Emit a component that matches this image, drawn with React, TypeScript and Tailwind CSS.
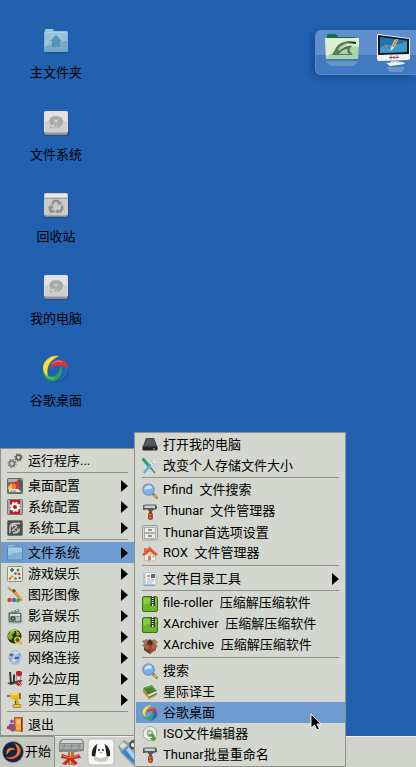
import type { ReactNode } from 'react';
import clsx from 'clsx';

interface Entry {
  label: string;
  icon: ReactNode;
  submenu?: boolean;
  active?: boolean;
}

const svg16 = 'h-4 w-4 shrink-0';

function GearsIcon() {
  return (
    <svg viewBox="0 0 16 16" className={svg16} fill="none">
      <circle cx="5" cy="10.5" r="2.600" stroke="#777974" strokeWidth="1.8" />
      <circle cx="5" cy="10.5" r="4" stroke="#777974" strokeWidth="1.2" strokeDasharray="1.6 1.54" />
      <circle cx="11.5" cy="4.5" r="2.3" stroke="#60625e" strokeWidth="1.7" />
      <circle cx="11.5" cy="4.5" r="3.5" stroke="#60625e" strokeWidth="1.2" strokeDasharray="1.4 1.35" />
    </svg>
  );
}

function DesktopConfigIcon() {
  return (
    <svg viewBox="0 0 16 16" className={svg16}>
      <rect x=".5" y=".5" width="15" height="15" rx="1" fill="#77726f" stroke="#666" />
      <path d="M1 1h14v3H1z" fill="#b5b2ae" />
      <path d="M2 8l4-4 5-1 1 4-1 4H3z" fill="#d2372a" />
      <path d="M1 9l4-4v6H1z" fill="#f4c430" />
      <path d="M5 7l2-2 2 2v4H5z" fill="#f07a35" />
      <path d="M10 2l2 4 1 5 2 2V3l-2-2z" fill="#55575a" />
      <path d="M2 11h9l3 3H2z" fill="#ece7dd" />
      <path d="M3 13h6" stroke="#6b78a0" />
    </svg>
  );
}

function SystemConfigIcon() {
  return (
    <svg viewBox="0 0 16 16" className={svg16}>
      <rect x=".5" y=".5" width="15" height="15" rx="1" fill="#c5161c" stroke="#777" />
      <path d="M1 1h2v14H1zM13 1h2v14h-2z" fill="#a6a6a2" />
      <circle cx="8" cy="8" r="3.2" fill="none" stroke="#fff" strokeWidth="2.2" />
      <circle cx="8" cy="8" r="4.6" fill="none" stroke="#fff" strokeWidth="1.4" strokeDasharray="2 1.61" />
    </svg>
  );
}

function SystemToolsIcon() {
  return (
    <svg viewBox="0 0 16 16" className={svg16}>
      <rect x=".5" y=".5" width="15" height="15" rx="1" fill="#4b4e4d" stroke="#777" />
      <path d="M3 13V8c0-3 2-4.5 5-4.5h5M5 11l5-5M6 12.500c4 1 7-1 6-4M5 7.500c0-2 2-3 4-2" fill="none" stroke="#d5d7d5" strokeWidth="1.3" />
      <circle cx="9" cy="9.500" r="1.800" fill="none" stroke="#b5b7b5" />
    </svg>
  );
}

function FolderIcon() {
  return (
    <svg viewBox="0 0 16 16" className={svg16}>
      <path d="M1 2.500V.500h6l1 2z" fill="#b3d0e6" />
      <rect x=".5" y="2" width="15" height="13" rx="1" fill="#82b1d6" stroke="#5585b0" />
      <path d="M1 2.500h14v4.500c-5 0-9 1-14 3z" fill="#a5cae5" />
    </svg>
  );
}

function GamesIcon() {
  return (
    <svg viewBox="0 0 16 16" className={svg16}>
      <rect x=".5" y=".5" width="15" height="15" rx="1" fill="#e6e6d9" stroke="#8d8e86" />
      <path d="M3 4h4M5 2v4" stroke="#555" strokeWidth="1.500" />
      <circle cx="11" cy="4" r="1.500" fill="#498b3c" />
      <circle cx="8.500" cy="7.500" r="1.300" fill="#3c5d96" />
      <circle cx="5" cy="10.500" r="1.500" fill="#dfac21" />
      <circle cx="12" cy="8" r="1.300" fill="#c23b2c" />
      <circle cx="8.500" cy="12.500" r="1.300" fill="#498b3c" />
      <circle cx="12.500" cy="12" r="1.200" fill="#54707f" />
      <path d="M2 13l2-1" stroke="#c23b2c" strokeWidth="1.500" />
    </svg>
  );
}

function GraphicsIcon() {
  return (
    <svg viewBox="0 0 16 16" className={svg16}>
      <path d="M0 1l2-1 5 4-1 2z" fill="#c79a4b" />
      <path d="M6 3l3 1 6 8v2l-2-.500-7-8z" fill="#d9811f" />
      <path d="M5 3l2-1 2 2-2 2z" fill="#6b4227" />
      <path d="M8 5l6 7" stroke="#f6c158" />
      <circle cx="2.500" cy="13" r="2.200" fill="#d2412f" />
      <circle cx="7" cy="13" r="2.200" fill="#3e6fc4" />
      <circle cx="11" cy="13.500" r="2" fill="#40a64c" />
    </svg>
  );
}

function MediaIcon() {
  return (
    <svg viewBox="0 0 16 16" className={svg16}>
      <path d="M1 5l10-4 2 2-10 4z" fill="#6c716e" />
      <path d="M3 4l2 1M6 3l2 1M9 2l2 1" stroke="#e9ede9" />
      <rect x="2" y="5" width="12" height="9" rx="1" fill="#78988a" stroke="#4c5d55" />
      <path d="M3 6h10v2H3z" fill="#d2e0d6" />
      <circle cx="6" cy="10.500" r="2.300" fill="#38463f" />
      <circle cx="6" cy="10.500" r="1" fill="#82c9a4" />
      <path d="M9 10h4M9 12h4" stroke="#e1eee6" />
      <path d="M1 14l4 1h9l2-2" fill="none" stroke="#9ba39e" />
    </svg>
  );
}

function GlobeIcon() {
  return (
    <svg viewBox="0 0 16 16" className={svg16}>
      <circle cx="7.500" cy="7.500" r="7" fill="#1f3816" />
      <path d="M2 4l4-3 2 2-3 3 1 2-2 3C1 10 0 7 2 4zM9 2l3 1 1 3-3 1-1-3z" fill="#8bb32b" />
      <path d="M3 3c2-2 5-2 7-1" stroke="#d9eb9c" fill="none" />
      <circle cx="10.500" cy="11" r="2.700" fill="#335a5e" stroke="#e9bb22" strokeWidth="1.500" />
      <path d="M12.500 13l2.500 2" stroke="#e1a31d" strokeWidth="2" />
    </svg>
  );
}

function NetworkIcon() {
  return (
    <svg viewBox="0 0 16 16" className={svg16}>
      <circle cx="8" cy="7" r="6.500" fill="#7f9fd4" />
      <path d="M4 3c3-3 7-2 9 0L9 5zM4 9h4l1 4H6z" fill="#c9daf1" />
      <rect x="2" y="3" width="5" height="4" rx="1" fill="#4569ad" stroke="#dce5f0" />
      <rect x="7" y="6" width="6" height="4" rx="1" fill="#3a62ad" stroke="#e9eef6" />
      <path d="M4 14l3-2h5l1 2-4 1z" fill="#a9bbd0" />
    </svg>
  );
}

function OfficeIcon() {
  return (
    <svg viewBox="0 0 16 16" className={svg16}>
      <path d="M2 1h2l1 12H3zM6 4l2-1v9H6z" fill="#38393a" />
      <rect x="9" y="0" width="6" height="5" rx="2" fill="#ba2027" />
      <path d="M9 5h5l-1 5h-3z" fill="#e4dad6" stroke="#7b5352" strokeWidth=".6" />
      <path d="M0 12l14-3 2 1-12 4z" fill="#373737" />
      <path d="M7 11l6-1 2 4-4 1z" fill="#9a3030" />
      <path d="M11 11l4 4" stroke="#e5b765" />
    </svg>
  );
}

function DrillIcon() {
  return (
    <svg viewBox="0 0 16 16" className={svg16}>
      <path d="M3 1h9l2 1v4l-2 1H5L3 6z" fill="#eabc22" />
      <path d="M0 3h3v2H0z" fill="#777" />
      <path d="M12 1h2v6h-2z" fill="#8a7430" />
      <path d="M7 6h4l1 7H8z" fill="#ddab17" />
      <path d="M8 9h1v4H8z" fill="#655028" />
      <rect x="6" y="12.500" width="8" height="3" rx=".5" fill="#efc22d" stroke="#86651b" strokeWidth=".6" />
      <path d="M4 2h7" stroke="#fff0a5" />
    </svg>
  );
}

function LogoutIcon() {
  return (
    <svg viewBox="0 0 16 16" className={svg16}>
      <path d="M7 0h9v15l-9-1z" fill="#a9683a" />
      <path d="M8.500 1.500H14v12.500l-5.500-1z" fill="#ffa63c" />
      <path d="M10 3h3v4h-3z" fill="#ffc56f" />
      <path d="M14 2l1-1v14l-1-1z" fill="#6b4230" />
      <circle cx="5" cy="4.500" r="2" fill="#8a5eaa" />
      <path d="M2 7h5l2 4-3 4-5-3z" fill="#5660b5" />
      <path d="M0 9h5V7l3 3.500L5 14v-2H0z" fill="#c43a49" />
    </svg>
  );
}

function DriveIcon() {
  return (
    <svg viewBox="0 0 16 16" className={svg16}>
      <path d="M4 1h8l3 8v4H1V9z" fill="#3f4245" />
      <path d="M4.500 2h7l2.500 7H2z" fill="#575a5d" />
      <rect x=".5" y="8.500" width="15" height="5" rx="1" fill="#202224" />
      <path d="M1 9h14" stroke="#77797b" strokeWidth=".7" />
      <path d="M11 12h2" stroke="#afb1b2" />
    </svg>
  );
}

function ToolsIcon() {
  return (
    <svg viewBox="0 0 16 16" className={svg16} fill="none">
      <path d="M1.500 1.500l5 6" stroke="#24a267" strokeWidth="3" strokeLinecap="round" />
      <path d="M7 8l6 7" stroke="#6e7476" strokeWidth="1.500" />
      <path d="M2.500 14l6.500-7.500" stroke="#5bb0df" strokeWidth="2.600" strokeLinecap="round" />
      <path d="M9 6.500l2-2M11 1v4h4" stroke="#e3ebef" strokeWidth="2.500" />
      <path d="M10 1v4l1 1h4" stroke="#91a3ad" strokeWidth=".7" />
    </svg>
  );
}

function SearchIcon() {
  return (
    <svg viewBox="0 0 16 16" className={svg16}>
      <path d="M10.500 10.500l4 4" stroke="#98733a" strokeWidth="2.800" strokeLinecap="round" />
      <path d="M12 12l2.500 2.500" stroke="#e9bd64" strokeWidth="1.400" />
      <circle cx="6.500" cy="6.500" r="5.700" fill="#77b3f0" stroke="#7f97ba" strokeWidth="1.300" />
      <path d="M2.500 7c0-4 5-6 7.500-3-1 3-4 1-7.500 3z" fill="#d1e9fd" />
    </svg>
  );
}

function HammerIcon() {
  return (
    <svg viewBox="0 0 16 16" className={svg16}>
      <path d="M7 6h3v5H7z" fill="#85522f" />
      <rect x="6.500" y="9" width="4" height="6.500" rx="1.300" fill="#bf562c" stroke="#65311d" strokeWidth=".6" />
      <path d="M8 10v4" stroke="#f5a165" />
      <path d="M1 1.500L3 .500h11l1 2v2.500l-4 1v1H6V5.500L1 6z" fill="#55585a" />
      <path d="M2.500 1.500H13V4H2.500z" fill="#c8ccce" />
      <path d="M6.500 12h4" stroke="#a32821" />
    </svg>
  );
}

function CabinetIcon() {
  return (
    <svg viewBox="0 0 16 16" className={svg16}>
      <rect x=".5" y=".5" width="15" height="14.500" rx="1.500" fill="#d6d8d5" stroke="#9a9c99" />
      <rect x="2.500" y="2.500" width="11" height="5" fill="#eceeeb" stroke="#a0a29f" strokeWidth=".8" />
      <rect x="2.500" y="8.500" width="11" height="5" fill="#eceeeb" stroke="#a0a29f" strokeWidth=".8" />
      <path d="M6 5h4M6 11h4" stroke="#757772" strokeWidth="1.400" />
    </svg>
  );
}

function HomeIcon() {
  return (
    <svg viewBox="0 0 16 16" className={svg16}>
      <path d="M2.500 8h11v6.500l-5 .8-6-1z" fill="#f3f0ea" stroke="#aaa59b" strokeWidth=".7" />
      <path d="M2 2h2.500v4H2z" fill="#d07654" />
      <path d="M0 8.500L7.500.500l8.500 8-2 1.500-6-5-6 5z" fill="#e75a2b" />
      <path d="M3 9l5-4.500 5 4.500" fill="none" stroke="#c0482a" strokeWidth=".7" />
      <rect x="6" y="9.500" width="3" height="5" fill="#e17a46" />
      <path d="M10.500 9.500h2v2h-2z" fill="#93afc2" />
    </svg>
  );
}

function DirectoryIcon() {
  return (
    <svg viewBox="0 0 16 16" className={svg16}>
      <path d="M1 2h2v13H1z" fill="#9cc6e4" />
      <path d="M3 1.500h11v12H3z" fill="#f4f5f1" stroke="#b4b7b3" strokeWidth=".7" />
      <path d="M5 4h3v2H5z" fill="#d49342" />
      <path d="M9 3h4v4H9z" fill="#426d98" />
      <path d="M5 8h3M5 10h7M5 12h5M9 8.500h3" stroke="#8aa6bc" strokeWidth=".8" />
      <path d="M2 14.500h11" stroke="#79a9cd" />
    </svg>
  );
}

function ZipIcon() {
  return (
    <svg viewBox="0 0 16 16" className={svg16}>
      <rect x=".5" y=".5" width="15" height="15" rx="1.500" fill="#69b52b" stroke="#34741a" />
      <path d="M1.500 2h13v4c-5 0-9 1-13 3z" fill="#8acd45" />
      <path d="M8.500 0h4.500v10H8.500z" fill="#2f3a2b" />
      <path d="M10.700 0v8" stroke="#e6ebe4" strokeWidth="1.800" strokeDasharray="1 1" />
      <path d="M10 8h1.500v2H10z" fill="#e6ebe4" />
    </svg>
  );
}

function BoxIcon() {
  return (
    <svg viewBox="0 0 16 16" className={svg16}>
      <path d="M2 5l6-3 6 3v7l-6 4-6-4z" fill="#85553b" />
      <path d="M2 5l6 3v8l-6-4z" fill="#694030" />
      <path d="M0 3l5-2 3 3-5 3zM8 4l4-3 4 3-3 3z" fill="#a87751" />
      <path d="M0 7l3-1 5 3-3 3zM8 9l5-3 3 2-4 4z" fill="#9c6a4b" />
      <path d="M5 4l3-3 3 3-1.500 4h-3z" fill="#46302a" />
      <path d="M6.500 7h3v3.500L8 12.500l-1.500-2z" fill="#d62d20" />
    </svg>
  );
}

function BookIcon() {
  return (
    <svg viewBox="0 0 16 16" className={svg16}>
      <path d="M1 4l9-3 5 6-9 4z" fill="#4b7f2e" />
      <path d="M6 11l9-4v4l-8 4.500z" fill="#55802f" />
      <path d="M5.500 11L15 7v1.500l-9 4.500z" fill="#f2ebd1" />
      <path d="M1 4l5 7 1 4.500L1 8z" fill="#b48e40" />
      <path d="M3 4.500l7-2.500 3 4" fill="none" stroke="#87ae54" />
      <path d="M6.500 15l8.500-4.500" stroke="#dccf9d" strokeWidth=".8" />
    </svg>
  );
}

function DiscIcon() {
  return (
    <svg viewBox="0 0 16 16" className={svg16}>
      <circle cx="8" cy="7.500" r="7" fill="#eef0ed" stroke="#a3a5a2" />
      <path d="M2 5a7 7 0 016-4v5z" fill="#d3dfcf" />
      <circle cx="8" cy="7.500" r="3" fill="#b4c8ac" stroke="#97a190" />
      <circle cx="8" cy="7.500" r="1" fill="#fff" />
      <path d="M7 8c5-1 6 1 6 4h2l-3.500 3.500L7.500 12H10c0-2-1-2-3-2z" fill="#4ca52c" />
    </svg>
  );
}

// Interlocked four colour ring
function SwirlIcon({ className = svg16 }: { className?: string }) {
  return (
    <svg viewBox="0 0 28 28" className={className}>
      <path d="M27 14c1 8-6 13-14 14l6-4 6-8z" fill="#102b4a" opacity=".35" />
      <path d="M26 12c1 8-4 14-13 15 4-2 6-4 7-8 1-3 0-5-2-8 3 0 6 0 8 1z" fill="#2364b4" />
      <path d="M1 15c0 7 4 11 10 11 6-1 9-6 9-12l-2-3c0 5-2 9-6 10-5 1-9-1-11-6z" fill="#2fa350" />
      <path d="M8 14c1-5 4-9 10-9 5 0 8 3 8 9-3-3-6-4-9-3.500-4 0-6 1-9 3.500z" fill="#dc3338" />
      <path d="M17 1C9 0 2 5 1 12c0 4 1 7 5 9-1-4-1-8 2-13 2-3 5-5 9-7z" fill="#f3dc2c" />
      <path d="M10 9c3-3 7-4 10-2" fill="none" stroke="#f08580" />
      <path d="M3 12c1-4 4-7 7-8" fill="none" stroke="#fbf08a" />
      <path d="M3 19c2 4 6 5 10 4" fill="none" stroke="#7acb83" />
    </svg>
  );
}

function HomeFolderIcon() {
  return (
    <svg viewBox="0 0 26 26" className="h-[26px] w-[26px]">
      <path d="M2 4V2q0-1 1-1h7l1 2h13v3z" fill="#9cc5dc" />
      <path d="M2 23h23v1.500q-1 1-2 1H3q-1 0-1-1z" fill="#164274" opacity=".6" />
      <rect x="1" y="3" width="24" height="21" rx="1.500" fill="#76aacb" />
      <path d="M1.500 4h23v9c-9 0-16 2-23 6z" fill="#96c2da" />
      <path d="M2 4h22" stroke="#bbdbe9" />
      <path d="M13 7l-6 6h2v6h8v-6h2z" fill="#5a92b6" />
    </svg>
  );
}

function DiskIcon() {
  return (
    <svg viewBox="0 0 26 26" className="h-[26px] w-[26px]">
      <rect x="1" y="4" width="25" height="22" rx="2" fill="#164274" opacity=".5" />
      <rect x="1" y="1" width="24" height="24" rx="2" fill="#8c8f91" />
      <rect x="1" y="1" width="24" height="21.500" rx="2" fill="#e2e2e2" />
      <path d="M2 11h22v11H2z" fill="#cfcfcf" />
      <path d="M7 14c-2-5 1-8 6-8 5 0 8 3 7 7-1 3-4 5-8 6 2-1 3-3 3-5-2 3-3 4-5 4 1-1 2-3 2-4-2 1-4 2-5 0z" fill="#a9abab" />
      <ellipse cx="13" cy="11" rx="2" ry="1.500" fill="#c9caca" />
      <path d="M8 16.500v2" stroke="#9b9d9d" strokeWidth="1.500" />
    </svg>
  );
}

function TrashIcon() {
  return (
    <svg viewBox="0 0 26 26" className="h-[26px] w-[26px]">
      <rect x="1" y="4" width="25" height="22" rx="2" fill="#164274" opacity=".5" />
      <rect x="1" y="1" width="24" height="24" rx="2" fill="#858786" />
      <rect x="1" y="1" width="24" height="22.500" rx="2" fill="#cbcbc9" />
      <path d="M2 2h22v3H2z" fill="#e8e8e7" />
      <path d="M1 6.500h24" stroke="#a3a5a4" />
      <g fill="none" stroke="#8d908f" strokeWidth="2.400">
        <path d="M9 12.500l2-3.500h4l1.500 3" />
        <path d="M18.500 13.500l1 2.500-2 3.500h-3" />
        <path d="M11.500 19.500H8L6.500 16 8 13.500" />
      </g>
      <path d="M14.500 12.500h4V9.500zM15 17v5l-3-2.500zM6 14.500l4-1v4z" fill="#8d908f" />
    </svg>
  );
}

function DockFolder() {
  return (
    <svg viewBox="0 0 36 34" className="h-[34px] w-9">
      <path d="M3 5V3q0-2 2-2h7l2 3h17v4H2z" fill="#0e6d43" />
      <path d="M1 5h34l-1 21H2z" fill="#a9d6a6" />
      <path d="M1 5h34v9C22 13 12 18 2 24z" fill="#dcf0d0" />
      <path d="M11 17c2-7 12-11 21-8l-1 2c-8-2-13 1-16 7 5-5 9-6 14-5-5 2-4 5 0 9-5-1-7-3-5-6-4 0-7 2-9 5h13v1H8c1-2 2-4 3-5z" fill="#567a58" />
      <path d="M14 16c4-5 8-6 12-6-5 2-8 4-11 8z" fill="#a5c795" />
      <path d="M24 9l8 0v2z" fill="#1e2d24" />
      <path d="M2 28h32l-4 5H6z" fill="#8dbbc8" opacity=".45" />
    </svg>
  );
}

function DockMonitor() {
  return (
    <svg viewBox="0 0 40 42" className="h-[42px] w-10">
      <path d="M3 2q0-1 1-1l30 4q2 0 2 2v18q0 2-2 2l-29 1q-2 0-2-2z" fill="#f1f3f4" />
      <path d="M4 2l31 4v15L4 22z" fill="#12171d" />
      <path d="M6 4l27 3.500V19L6 20z" fill="#1f74ab" />
      <path d="M6 15c9-6 14 0 27-7v11L6 20z" fill="#3c97cb" />
      <path d="M24 6.500l-3 7-5 5 2-6 3-6z" fill="#f5eee5" />
      <path d="M24 6.500l-4 8-2-1 4-7z" fill="#e57b30" />
      <circle cx="12" cy="13" r="1.500" fill="#f0624b" />
      <path d="M15 24.500h10M17 22.500v4M20 23v3M23 22.500v3" stroke="#8e5e55" strokeWidth="1" />
      <path d="M17 28h8l1 2H16z" fill="#c3cbd4" />
      <path d="M12 30l17-1 2 2-15 2z" fill="#f1f4f7" />
      <path d="M12 34h19l-3 5H16z" fill="#a5c4e7" opacity=".4" />
    </svg>
  );
}

function TaskHammer() {
  return (
    <svg viewBox="0 0 28 28" className="h-7 w-7">
      <path d="M11 12h6l1 15h-7z" fill="#b77631" />
      <path d="M13 12h1v14h-1z" fill="#e8b164" />
      <path d="M2 4l3-3h20l2 3v9l-8 1H2z" fill="#858888" />
      <path d="M3 5l3-3h18l2 3z" fill="#d7d9d9" />
      <path d="M3 6h23v5H3z" fill="#a8abab" />
      <path d="M8 6l-2 5M15 6l-1 5M22 6v5M4 8h20" stroke="#74777788" />
      <path d="M5 16l9 3 8-3 2 4-8 1 5 4-3 2-5-5-4 5-4-1 5-5-6-1z" fill="#c52a22" />
      <path d="M6 18l8 2 8-3" fill="none" stroke="#ee7266" />
    </svg>
  );
}

function TaskPenguin() {
  return (
    <svg viewBox="0 0 28 28" className="h-7 w-7">
      <rect x="1" y="1" width="26" height="26" rx="3" fill="#f5f5f3" stroke="#babcb7" />
      <path d="M5 18c-1-5 2-11 6-12l1 4-3 9zM23 18c1-5-2-11-6-12l-1 4 3 9z" fill="#1d1f1f" />
      <path d="M10 7c1-2 7-2 8 0l2 13q-6 4-12 0z" fill="#fff" />
      <path d="M7 18q7 4 14 0v4q-7 4-14 0z" fill="#c9cbc7" />
      <circle cx="12" cy="12" r="1" fill="#222" />
      <circle cx="16" cy="12" r="1" fill="#222" />
      <path d="M12 14h4l-2 2z" fill="#dfb657" />
    </svg>
  );
}

function TaskPlayer() {
  return (
    <svg viewBox="0 0 28 28" className="h-7 w-7 shrink-0">
      <path d="M1 8l6-6 5 3 5-4h7v26H16L4 15z" fill="#8e9ca3" />
      <path d="M2 8l4-4 4 3-4 4z" fill="#d7dfe3" />
      <path d="M5 14l6-5 10 14-3 4z" fill="#3880ce" />
      <path d="M9 12l3-3 8 11-3 2z" fill="#a4d2f5" />
      <circle cx="17" cy="7" r="5" fill="#505557" />
      <circle cx="16" cy="7" r="2" fill="#f5f5f5" />
      <path d="M15 12l6-3v5z" fill="#e7b03f" />
    </svg>
  );
}

function StartLogo() {
  return (
    <svg viewBox="0 0 22 22" className="h-[22px] w-[22px] shrink-0">
      <circle cx="11" cy="11" r="10.500" fill="#11253f" stroke="#8090a0" strokeWidth=".6" />
      <path d="M12 2c7 2 9 9 4 13-4 4-9 4-12 1 6 1 11-1 11-6 0-3-1-6-3-8z" fill="#e85c27" />
      <path d="M5 14c-2-4 1-8 6-7 1 0 2 1 2 2-4-1-6 1-8 5z" fill="#ef7a31" />
      <path d="M14 4c4 3 4 7 1 11" fill="none" stroke="#f6a468" strokeWidth=".8" />
    </svg>
  );
}

const startGroups: Entry[][] = [
  [{ label: '运行程序...', icon: <GearsIcon /> }],
  [
    { label: '桌面配置', icon: <DesktopConfigIcon />, submenu: true },
    { label: '系统配置', icon: <SystemConfigIcon />, submenu: true },
    { label: '系统工具', icon: <SystemToolsIcon />, submenu: true },
  ],
  [
    { label: '文件系统', icon: <FolderIcon />, submenu: true, active: true },
    { label: '游戏娱乐', icon: <GamesIcon />, submenu: true },
    { label: '图形图像', icon: <GraphicsIcon />, submenu: true },
    { label: '影音娱乐', icon: <MediaIcon />, submenu: true },
    { label: '网络应用', icon: <GlobeIcon />, submenu: true },
    { label: '网络连接', icon: <NetworkIcon />, submenu: true },
    { label: '办公应用', icon: <OfficeIcon />, submenu: true },
    { label: '实用工具', icon: <DrillIcon />, submenu: true },
  ],
  [{ label: '退出', icon: <LogoutIcon /> }],
];

const fileGroups: Entry[][] = [
  [
    { label: '打开我的电脑', icon: <DriveIcon /> },
    { label: '改变个人存储文件大小', icon: <ToolsIcon /> },
  ],
  [
    { label: 'Pfind 文件搜索', icon: <SearchIcon /> },
    { label: 'Thunar 文件管理器', icon: <HammerIcon /> },
    { label: 'Thunar首选项设置', icon: <CabinetIcon /> },
    { label: 'ROX 文件管理器', icon: <HomeIcon /> },
  ],
  [{ label: '文件目录工具', icon: <DirectoryIcon />, submenu: true }],
  [
    { label: 'file-roller 压缩解压缩软件', icon: <ZipIcon /> },
    { label: 'XArchiver 压缩解压缩软件', icon: <ZipIcon /> },
    { label: 'XArchive 压缩解压缩软件', icon: <BoxIcon /> },
  ],
  [
    { label: '搜索', icon: <SearchIcon /> },
    { label: '星际译王', icon: <BookIcon /> },
    { label: '谷歌桌面', icon: <SwirlIcon />, active: true },
    { label: 'ISO文件编辑器', icon: <DiscIcon /> },
    { label: 'Thunar批量重命名', icon: <HammerIcon /> },
  ],
];

const shortcuts = [
  { label: '主文件夹', icon: <HomeFolderIcon /> },
  { label: '文件系统', icon: <DiskIcon /> },
  { label: '回收站', icon: <TrashIcon /> },
  { label: '我的电脑', icon: <DiskIcon /> },
  { label: '谷歌桌面', icon: <SwirlIcon className="h-7 w-7" /> },
];

// Latin and CJK words are set apart by a fixed-pitch space
function Label({ text }: { text: string }) {
  const [first, second] = text.split(' ');
  return (
    <span className="whitespace-pre">
      {first}
      {second && <span className="font-['Liberation_Mono',monospace] text-[11px]"> </span>}
      {second}
    </span>
  );
}

function Menu({ groups, label, className }: { groups: Entry[][]; label: string; className: string }) {
  return (
    <div role="menu" aria-label={label} className={clsx('absolute border border-[#8e918a] bg-[#d4d7cf] pt-px', className)}>
      {groups.map((group, i) => (
        <div key={i} role="group">
          {i > 0 && (
            <div role="separator" className="mx-1.5 h-1 pt-px">
              <div className="h-px bg-[#90938b]" />
            </div>
          )}
          {group.map((entry) => (
            <button
              key={entry.label}
              role="menuitem"
              className={clsx(
                'flex h-[21px] w-full items-center gap-[5px] px-1.5 text-left',
                entry.active ? 'bg-[#6f9cd0]' : 'hover:bg-[#6f9cd0]',
              )}
            >
              {entry.icon}
              <Label text={entry.label} />
              {entry.submenu && (
                <svg viewBox="0 0 7 12" className="ml-auto h-3 w-[7px] shrink-0">
                  <path d="M0 0l7 6-7 6z" fill="#000" />
                </svg>
              )}
            </button>
          ))}
        </div>
      ))}
    </div>
  );
}

export default function App() {
  return (
    <div className="flex min-h-screen flex-col overflow-hidden bg-[#2161b0] font-[Roboto,'Noto_Sans_CJK_SC',sans-serif] text-[13px] leading-5 text-black">
      <main className="flex flex-1 items-start justify-between">
        <nav aria-label="桌面" className="flex flex-col gap-7 pt-[27px] pl-4">
          {shortcuts.map((item) => (
            <button key={item.label} className="flex h-[54px] w-20 flex-col items-center justify-between">
              <span className="flex h-7 items-center">{item.icon}</span>
              <span className="h-4 leading-4">{item.label}</span>
            </button>
          ))}
        </nav>
        <aside className="mt-[30px] flex h-[45px] items-start gap-3.5 rounded-l-md border border-r-0 border-[#5e8cc8] bg-linear-to-b from-[#5f8fcd] from-55% to-[#4379c0] to-55% pt-0.5 pr-0.5 pl-2 shadow-[-3px_2px_7px_#174a8d]">
          <button aria-label="文件夹"><DockFolder /></button>
          <button aria-label="电脑"><DockMonitor /></button>
        </aside>
      </main>

      <footer className="relative flex h-[31px] items-stretch bg-[#d0d3cb] shadow-[inset_0_1px_#f0f1ed]">
        <button className="flex w-[55px] items-center gap-px border-t border-r border-[#8e918a] bg-[#c6c9c1] pl-0.5">
          <StartLogo />
          <span className="whitespace-nowrap">开始</span>
        </button>
        <div className="flex items-center gap-0.5 pl-0.5">
          <button aria-label="工具"><TaskHammer /></button>
          <button aria-label="QQ"><TaskPenguin /></button>
          <button aria-label="播放器"><TaskPlayer /></button>
        </div>
        <Menu groups={startGroups} label="开始" className="bottom-full left-0 w-[135px]" />
        <Menu groups={fileGroups} label="文件系统" className="bottom-0 left-[134px] w-[212px] pb-px pl-px" />
        <svg viewBox="0 0 12 18" className="pointer-events-none absolute bottom-9 left-[310px] h-[18px] w-3">
          <path d="M1 1v14l3.500-3 2.500 5 2.500-1-2.500-5H11z" fill="#000" stroke="#fff" strokeWidth=".9" />
        </svg>
      </footer>
    </div>
  );
}
